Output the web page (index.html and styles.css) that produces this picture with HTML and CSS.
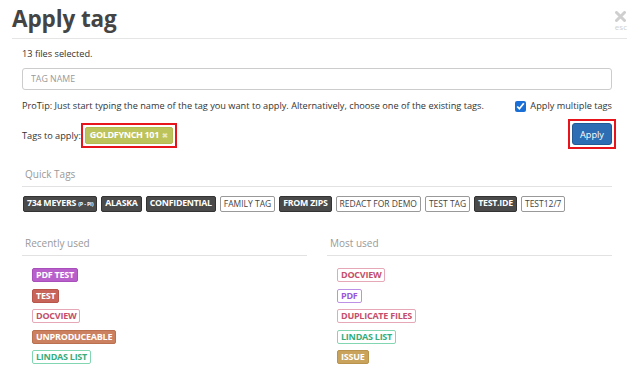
FILE: index.html
```html
<!DOCTYPE html>
<html lang="en">
<head>
    <meta charset="UTF-8">
    <title>Apply tag</title>
    <link rel="stylesheet" href="styles.css">
</head>
<body>
<div class="modal">
    <header class="modal-header">
        <h1>Apply tag</h1>
        <div class="close">
            <svg width="11" height="11" viewBox="0 0 11 11"><path d="M1.5 1.5 L9.5 9.5 M9.5 1.5 L1.5 9.5" stroke="#cfcfcf" stroke-width="3" stroke-linecap="round"/></svg>
            <span>esc</span>
        </div>
    </header>

    <div class="modal-body">
        <p class="count">13 files selected.</p>
        <input type="text" class="tag-input" placeholder="TAG NAME">

        <div class="tip-row">
            <p>ProTip: Just start typing the name of the tag you want to apply. Alternatively, choose one of the existing tags.</p>
            <label class="multi"><input type="checkbox" checked> Apply multiple tags</label>
        </div>

        <div class="apply-row">
            <div class="to-apply">
                <span>Tags to apply:</span>
                <span class="hl"><span class="tag gold">GOLDFYNCH 101 <b class="x">✖</b></span></span>
            </div>
            <span class="hl hl-btn"><button type="button" class="btn-apply">Apply</button></span>
        </div>

        <h3 class="section">Quick Tags</h3>
        <div class="quick">
            <span class="tag dark">734 MEYERS <small>(P - PI)</small></span>
            <span class="tag dark">ALASKA</span>
            <span class="tag dark">CONFIDENTIAL</span>
            <span class="tag plain">FAMILY TAG</span>
            <span class="tag dark">FROM ZIPS</span>
            <span class="tag plain">REDACT FOR DEMO</span>
            <span class="tag plain">TEST TAG</span>
            <span class="tag dark">TEST.IDE</span>
            <span class="tag plain">TEST12/7</span>
        </div>

        <div class="columns">
            <div class="col">
                <h3 class="section">Recently used</h3>
                <ul class="tag-list">
                    <li><span class="tag purple">PDF TEST</span></li>
                    <li><span class="tag red">TEST</span></li>
                    <li><span class="tag pink-o">DOCVIEW</span></li>
                    <li><span class="tag orange">UNPRODUCEABLE</span></li>
                    <li><span class="tag green-o">LINDAS LIST</span></li>
                </ul>
            </div>
            <div class="col">
                <h3 class="section">Most used</h3>
                <ul class="tag-list">
                    <li><span class="tag pink-o">DOCVIEW</span></li>
                    <li><span class="tag violet-o">PDF</span></li>
                    <li><span class="tag pink-o">DUPLICATE FILES</span></li>
                    <li><span class="tag green-o">LINDAS LIST</span></li>
                    <li><span class="tag tan">ISSUE</span></li>
                </ul>
            </div>
        </div>
    </div>
</div>
</body>
</html>
```

FILE: styles.css
```css
* {
    margin: 0;
    padding: 0;
    box-sizing: border-box;
}

body {
    font-family: "Open Sans", sans-serif;
    color: #333;
    background: #fff;
    font-size: 9.2px;
}

/* Header */
.modal-header {
    display: flex;
    justify-content: space-between;
    align-items: flex-start;
    margin: 0 13px 0 12px;
    height: 39px;
    border-bottom: 1px solid #e5e5e5;
}

.modal-header h1 {
    font-size: 22.5px;
    font-weight: 700;
    color: #444;
    line-height: 24px;
    margin-top: 7px;
    letter-spacing: -0.1px;
}

.close {
    display: flex;
    flex-direction: column;
    align-items: center;
    margin-top: 11px;
    color: #d0d0d0;
    font-size: 8px;
    line-height: 9px;
}

/* Body */
.modal-body {
    padding: 0 28px 0 22px;
}

.count {
    margin-top: 8px;
    line-height: 14px;
}

.tag-input {
    display: block;
    width: 100%;
    height: 22px;
    margin-top: 7px;
    padding: 0 8px;
    border: 1px solid #ccc;
    border-radius: 3px;
    font-family: inherit;
    font-size: 8.8px;
}

.tag-input::placeholder {
    color: #999;
}

.tip-row {
    display: flex;
    justify-content: space-between;
    align-items: center;
    margin-top: 9px;
    line-height: 14px;
}

.multi {
    display: flex;
    align-items: center;
    gap: 4px;
    white-space: nowrap;
}

.multi input {
    width: 11px;
    height: 11px;
    accent-color: #1a6fd6;
}

.apply-row {
    display: flex;
    justify-content: space-between;
    align-items: flex-start;
    margin-top: 6px;
}

.to-apply {
    display: flex;
    align-items: center;
    margin-top: 4px;
}

.hl {
    display: inline-block;
    border: 2px solid #e8141c;
    padding: 2px;
}

.hl-btn {
    margin-right: -4px;
}

.btn-apply {
    display: block;
    width: 40px;
    height: 22px;
    background: #2c6db3;
    color: #fff;
    border: 1px solid #245a94;
    border-radius: 3px;
    font-family: inherit;
    font-size: 9.2px;
}

/* Sections */
.section {
    font-size: 10px;
    font-weight: 400;
    color: #999;
    padding: 0 0 4px 3px;
    border-bottom: 1px solid #e2e2e2;
    line-height: 15px;
}

.apply-row + .section {
    margin-top: 18px;
}

.quick {
    display: flex;
    flex-wrap: wrap;
    gap: 4px;
    margin-top: 9px;
    padding-left: 1px;
}

.columns {
    display: grid;
    grid-template-columns: 1fr 1fr;
    gap: 20px;
    margin-top: 24px;
}

.tag-list {
    list-style: none;
    padding: 12px 0 0 10px;
    display: flex;
    flex-direction: column;
    align-items: flex-start;
    gap: 6.5px;
}

/* Tags */
.tag {
    display: inline-block;
    font-size: 9px;
    font-weight: 700;
    line-height: 11px;
    padding: 1px 3px;
    border: 1px solid transparent;
    border-radius: 2px;
    color: #fff;
    letter-spacing: -0.25px;
}

.quick .tag {
    font-size: 8.8px;
}

.quick .plain {
    font-size: 8.5px;
}

.tag-list .tag {
    line-height: 10px;
}

.tag small {
    font-size: 5.5px;
}

.tag .x {
    font-size: 7px;
    color: #e8e8c0;
    margin-left: 1px;
}

.tag.gold {
    background: #bcc35a;
    border-color: #b3ba52;
    padding: 1px 4px;
    line-height: 12px;
    letter-spacing: -0.35px;
}

.dark {
    background: #4a4a4a;
    border-color: #333;
}

.plain {
    background: #fff;
    color: #444;
    border-color: #999;
    font-weight: 400;
    letter-spacing: 0;
}

.purple { background: #b95fcc; border-color: #a94fbb; }
.red { background: #c8655b; border-color: #b8564c; }
.orange { background: #cb8060; border-color: #bb7050; }
.tan { background: #c9a35c; border-color: #b9934c; }

.pink-o { background: #fff; color: #c44f6c; border-color: #e6a7b6; }
.green-o { background: #fff; color: #36ad7c; border-color: #83d6b2; }
.violet-o { background: #fff; color: #9a58d6; border-color: #bd92e6; }
```
